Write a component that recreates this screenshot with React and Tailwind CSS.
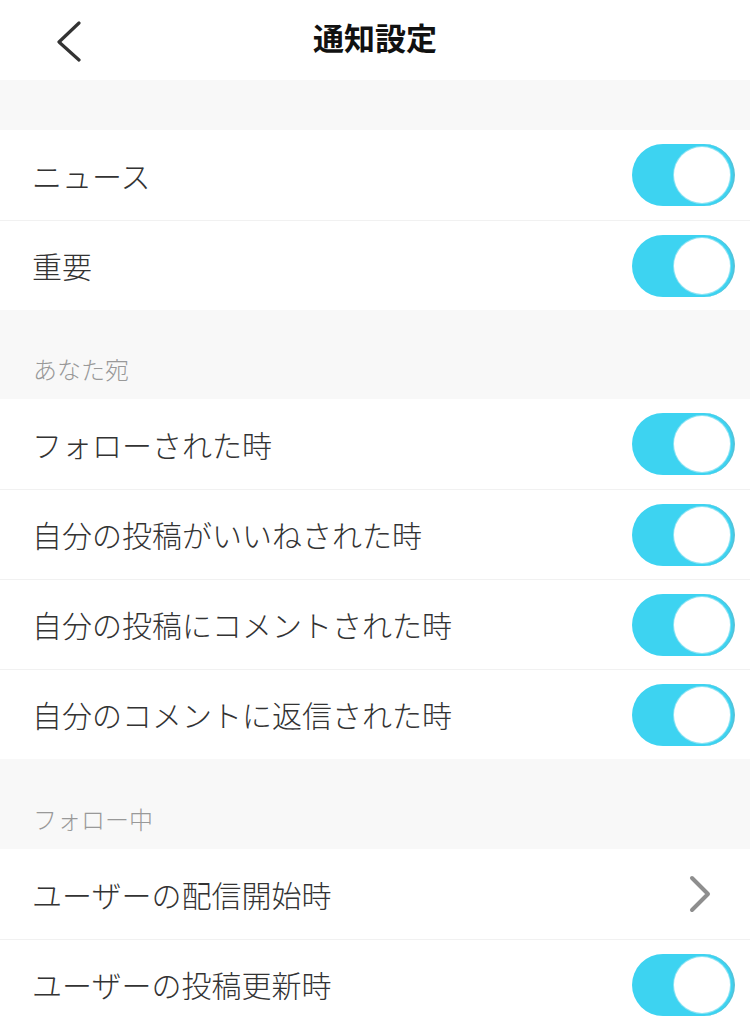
import { useState } from "react";

const FONT = { fontFamily: '"Noto Sans CJK JP", "Noto Sans", sans-serif' };

const SECTIONS = [
  { title: null, rows: [{ label: "ニュース" }, { label: "重要" }] },
  {
    title: "あなた宛",
    rows: [
      { label: "フォローされた時" },
      { label: "自分の投稿がいいねされた時" },
      { label: "自分の投稿にコメントされた時" },
      { label: "自分のコメントに返信された時" },
    ],
  },
  {
    title: "フォロー中",
    rows: [{ label: "ユーザーの配信開始時", link: true }, { label: "ユーザーの投稿更新時" }],
  },
];

function Toggle({ on, onChange }) {
  return (
    <button
      onClick={onChange}
      className={`flex h-[62px] w-[103px] shrink-0 items-center rounded-full p-[3px] transition-colors ${on ? "justify-end bg-[#3dd3f1] border-r-2 border-[#52c3da]" : "justify-start bg-[#e5e5e5]"}`}
    >
      <span className="h-[56px] w-[56px] rounded-full bg-white ring-1 ring-[#8fe3f3]" />
    </button>
  );
}

function Row({ label, link, first, on, onToggle }) {
  return (
    <div className={`flex h-[90px] items-center justify-between bg-white pl-[32px] pr-[15px] ${first ? "" : "border-t border-[#f1f1f1]"}`}>
      <span className="text-[30px] font-light text-[#333]">{label}</span>
      {link ? (
        <svg width="30" height="44" viewBox="0 0 30 44" className="mr-[20px]">
          <path d="M7 6 L23 22 L7 38" fill="none" stroke="#8e8e8e" strokeWidth="4" strokeLinecap="round" strokeLinejoin="round" />
        </svg>
      ) : (
        <Toggle on={on} onChange={onToggle} />
      )}
    </div>
  );
}

export default function App() {
  const [state, setState] = useState({});
  const flip = (k) => setState((s) => ({ ...s, [k]: s[k] === false }));

  return (
    <div style={FONT} className="min-h-screen w-[750px] bg-white">
      <header className="grid h-[80px] grid-cols-[1fr_auto_1fr] items-center bg-white pb-[6px]">
        <div className="pl-[52px] pt-[6px]">
          <svg width="34" height="44" viewBox="0 0 34 44">
            <path d="M27 5 L7 24 L27 42" fill="none" stroke="#333" strokeWidth="3.2" strokeLinecap="round" strokeLinejoin="round" />
          </svg>
        </div>
        <h1 className="text-[31px] font-bold text-[#111]">通知設定</h1>
        <div />
      </header>

      {SECTIONS.map((sec, i) => (
        <div key={i}>
          {sec.title ? (
            <div className={`flex items-end bg-[#f8f8f8] px-[33px] pb-[12px] ${i === 1 ? "h-[89px]" : "h-[90px]"}`}>
              <span className="text-[24px] font-light text-[#999]">{sec.title}</span>
            </div>
          ) : (
            <div className="h-[50px] bg-[#f8f8f8]" />
          )}
          {sec.rows.map((r, j) => (
            <Row
              key={r.label}
              {...r}
              first={j === 0}
              on={state[r.label] !== false}
              onToggle={() => flip(r.label)}
            />
          ))}
        </div>
      ))}
    </div>
  );
}
